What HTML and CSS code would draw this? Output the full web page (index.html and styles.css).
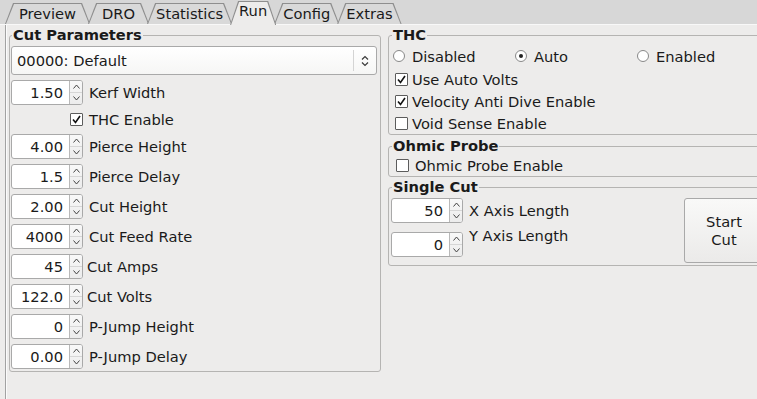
FILE: index.html
```
<!DOCTYPE html>
<html>
<head>
	<title>Run</title>
	<link rel="stylesheet" href="styles.css">
</head>
<body>
	<div class="tabbar">
		<span class="tab tab-wide">Preview</span>
		<span class="tab tab-wide">DRO</span>
		<span class="tab">Statistics</span>
		<span class="tab current">Run</span>
		<span class="tab">Config</span>
		<span class="tab">Extras</span>
	</div>

	<div class="pane">
		<div class="col-left">
			<fieldset class="group group-cut">
				<legend>Cut Parameters</legend>
				<div class="combo">
					<span class="combo-text">00000: Default</span>
					<span class="combo-btn">
						<svg width="8" height="12" viewBox="0 0 8 12"><polyline points="1,4.5 4,1.5 7,4.5" fill="none" stroke="#3a3a3a" stroke-width="1.2"/><polyline points="1,7.5 4,10.5 7,7.5" fill="none" stroke="#3a3a3a" stroke-width="1.2"/></svg>
					</span>
				</div>

				<div class="row">
					<span class="spin"><span class="spin-val">1.50</span><span class="spin-btns"><span><svg width="7" height="5" viewBox="0 0 7 5"><polyline points="0.5,4.5 3.5,1 6.5,4.5" fill="none" stroke="#444" stroke-width="1"/></svg></span><span><svg width="7" height="5" viewBox="0 0 7 5"><polyline points="0.5,0.5 3.5,4 6.5,0.5" fill="none" stroke="#444" stroke-width="1"/></svg></span></span></span>
					<span class="label">Kerf Width</span>
				</div>
				<div class="row row-check">
					<span class="check on"><svg width="11" height="11" viewBox="0 0 11 11"><polyline points="2,5.5 4.5,8.5 9,2" fill="none" stroke="#111" stroke-width="1.6"/></svg></span>
					<span class="label">THC Enable</span>
				</div>
				<div class="row">
					<span class="spin"><span class="spin-val">4.00</span><span class="spin-btns"><span><svg width="7" height="5" viewBox="0 0 7 5"><polyline points="0.5,4.5 3.5,1 6.5,4.5" fill="none" stroke="#444" stroke-width="1"/></svg></span><span><svg width="7" height="5" viewBox="0 0 7 5"><polyline points="0.5,0.5 3.5,4 6.5,0.5" fill="none" stroke="#444" stroke-width="1"/></svg></span></span></span>
					<span class="label">Pierce Height</span>
				</div>
				<div class="row">
					<span class="spin"><span class="spin-val">1.5</span><span class="spin-btns"><span><svg width="7" height="5" viewBox="0 0 7 5"><polyline points="0.5,4.5 3.5,1 6.5,4.5" fill="none" stroke="#444" stroke-width="1"/></svg></span><span><svg width="7" height="5" viewBox="0 0 7 5"><polyline points="0.5,0.5 3.5,4 6.5,0.5" fill="none" stroke="#444" stroke-width="1"/></svg></span></span></span>
					<span class="label">Pierce Delay</span>
				</div>
				<div class="row">
					<span class="spin"><span class="spin-val">2.00</span><span class="spin-btns"><span><svg width="7" height="5" viewBox="0 0 7 5"><polyline points="0.5,4.5 3.5,1 6.5,4.5" fill="none" stroke="#444" stroke-width="1"/></svg></span><span><svg width="7" height="5" viewBox="0 0 7 5"><polyline points="0.5,0.5 3.5,4 6.5,0.5" fill="none" stroke="#444" stroke-width="1"/></svg></span></span></span>
					<span class="label">Cut Height</span>
				</div>
				<div class="row">
					<span class="spin"><span class="spin-val">4000</span><span class="spin-btns"><span><svg width="7" height="5" viewBox="0 0 7 5"><polyline points="0.5,4.5 3.5,1 6.5,4.5" fill="none" stroke="#444" stroke-width="1"/></svg></span><span><svg width="7" height="5" viewBox="0 0 7 5"><polyline points="0.5,0.5 3.5,4 6.5,0.5" fill="none" stroke="#444" stroke-width="1"/></svg></span></span></span>
					<span class="label">Cut Feed Rate</span>
				</div>
				<div class="row row-tight">
					<span class="spin"><span class="spin-val">45</span><span class="spin-btns"><span><svg width="7" height="5" viewBox="0 0 7 5"><polyline points="0.5,4.5 3.5,1 6.5,4.5" fill="none" stroke="#444" stroke-width="1"/></svg></span><span><svg width="7" height="5" viewBox="0 0 7 5"><polyline points="0.5,0.5 3.5,4 6.5,0.5" fill="none" stroke="#444" stroke-width="1"/></svg></span></span></span>
					<span class="label">Cut Amps</span>
				</div>
				<div class="row row-tight">
					<span class="spin"><span class="spin-val">122.0</span><span class="spin-btns"><span><svg width="7" height="5" viewBox="0 0 7 5"><polyline points="0.5,4.5 3.5,1 6.5,4.5" fill="none" stroke="#444" stroke-width="1"/></svg></span><span><svg width="7" height="5" viewBox="0 0 7 5"><polyline points="0.5,0.5 3.5,4 6.5,0.5" fill="none" stroke="#444" stroke-width="1"/></svg></span></span></span>
					<span class="label">Cut Volts</span>
				</div>
				<div class="row">
					<span class="spin"><span class="spin-val">0</span><span class="spin-btns"><span><svg width="7" height="5" viewBox="0 0 7 5"><polyline points="0.5,4.5 3.5,1 6.5,4.5" fill="none" stroke="#444" stroke-width="1"/></svg></span><span><svg width="7" height="5" viewBox="0 0 7 5"><polyline points="0.5,0.5 3.5,4 6.5,0.5" fill="none" stroke="#444" stroke-width="1"/></svg></span></span></span>
					<span class="label">P-Jump Height</span>
				</div>
				<div class="row">
					<span class="spin"><span class="spin-val">0.00</span><span class="spin-btns"><span><svg width="7" height="5" viewBox="0 0 7 5"><polyline points="0.5,4.5 3.5,1 6.5,4.5" fill="none" stroke="#444" stroke-width="1"/></svg></span><span><svg width="7" height="5" viewBox="0 0 7 5"><polyline points="0.5,0.5 3.5,4 6.5,0.5" fill="none" stroke="#444" stroke-width="1"/></svg></span></span></span>
					<span class="label">P-Jump Delay</span>
				</div>
			</fieldset>
		</div>

		<div class="col-right">
			<fieldset class="group group-thc">
				<legend>THC</legend>
				<div class="radios">
					<span class="opt"><span class="radio"></span>Disabled</span>
					<span class="opt"><span class="radio on"></span>Auto</span>
					<span class="opt"><span class="radio"></span>Enabled</span>
				</div>
				<div class="opt-row"><span class="check on"><svg width="11" height="11" viewBox="0 0 11 11"><polyline points="2,5.5 4.5,8.5 9,2" fill="none" stroke="#111" stroke-width="1.6"/></svg></span>Use Auto Volts</div>
				<div class="opt-row"><span class="check on"><svg width="11" height="11" viewBox="0 0 11 11"><polyline points="2,5.5 4.5,8.5 9,2" fill="none" stroke="#111" stroke-width="1.6"/></svg></span>Velocity Anti Dive Enable</div>
				<div class="opt-row"><span class="check"></span>Void Sense Enable</div>
			</fieldset>

			<fieldset class="group group-ohmic">
				<legend>Ohmic Probe</legend>
				<div class="opt-row opt-wide"><span class="check"></span>Ohmic Probe Enable</div>
			</fieldset>

			<fieldset class="group group-single">
				<legend>Single Cut</legend>
				<div class="single">
					<div class="single-fields">
						<div class="row row-first">
							<span class="spin"><span class="spin-val">50</span><span class="spin-btns"><span><svg width="7" height="5" viewBox="0 0 7 5"><polyline points="0.5,4.5 3.5,1 6.5,4.5" fill="none" stroke="#444" stroke-width="1"/></svg></span><span><svg width="7" height="5" viewBox="0 0 7 5"><polyline points="0.5,0.5 3.5,4 6.5,0.5" fill="none" stroke="#444" stroke-width="1"/></svg></span></span></span>
							<span class="label">X Axis Length</span>
						</div>
						<div class="row row-second">
							<span class="spin"><span class="spin-val">0</span><span class="spin-btns"><span><svg width="7" height="5" viewBox="0 0 7 5"><polyline points="0.5,4.5 3.5,1 6.5,4.5" fill="none" stroke="#444" stroke-width="1"/></svg></span><span><svg width="7" height="5" viewBox="0 0 7 5"><polyline points="0.5,0.5 3.5,4 6.5,0.5" fill="none" stroke="#444" stroke-width="1"/></svg></span></span></span>
							<span class="label label-high">Y Axis Length</span>
						</div>
					</div>
					<button class="big-btn" type="button">Start<br>Cut</button>
				</div>
			</fieldset>
		</div>
	</div>
</body>
</html>
```
FILE: styles.css
```
/* Run tab */

html, body { margin: 0; padding: 0; }
body {
	width: 757px;
	height: 399px;
	overflow: hidden;
	background: #edeceb;
	color: #1a1a1a;
	font-family: "DejaVu Sans", sans-serif;
	font-size: 14.67px;
	line-height: 17px;
}

/* tabs */
.tabbar {
	display: flex;
	align-items: flex-end;
	height: 24px;
	padding-left: 5px;
	background: #d7d7d7;
	border-bottom: 1px solid #f8f8f8;
}
.tab {
	position: relative;
	z-index: 0;
	height: 21px;
	line-height: 21px;
	padding: 0 9px;
	margin-right: -2px;
	white-space: nowrap;
}
.tab-wide { padding: 0 14px; }
.tab::before, .tab::after {
	content: "";
	position: absolute;
	z-index: -1;
	clip-path: polygon(0 100%, 8px 0, calc(100% - 8px) 0, 100% 100%);
}
.tab::before { top: 0; left: 0; right: 0; bottom: 0; background: #8e8e8e; }
.tab::after { top: 1px; left: 1px; right: 1px; bottom: 0; background: #d9d9d9; }
.tab.current {
	height: 24px;
	margin-bottom: -1px;
	padding-bottom: 4px;
	box-sizing: border-box;
	line-height: 20px;
	z-index: 1;
}
.tab.current::after { background: #edeceb; }

/* pane */
.pane {
	display: flex;
	gap: 7px;
	height: 374px;
	padding: 2px 0 0 3px;
	box-sizing: border-box;
	border-left: 1px solid #a2a2a2;
	margin-left: 5px;
	box-shadow: inset 1px 0 #fbfbfb;
}
.col-left { flex: 0 0 372px; }
.col-right { flex: 0 0 380px; }

/* group boxes */
.group {
	margin: 0;
	min-width: 0;
	border: 1px solid #b5b4b2;
	border-radius: 3px;
	padding: 0 3px 2px 1px;
}
.group legend {
	margin-left: 1px;
	padding: 0 1px;
	font-weight: bold;
	line-height: 16px;
}
.group-thc, .group-ohmic, .group-single { padding: 0 2px 0 2px; }
.group-ohmic { margin-top: 3px; }
.group-single { margin-top: 2px; padding-bottom: 2px; }

/* combo */
.combo {
	display: flex;
	align-items: center;
	height: 29px;
	margin-top: 3px;
	border: 1px solid #a9a9a9;
	border-radius: 3px;
	background: linear-gradient(#ffffff, #f6f6f5);
	box-sizing: border-box;
}
.combo-text { flex: 1; padding-left: 5px; }
.combo-btn {
	display: flex;
	align-items: center;
	justify-content: center;
	width: 22px;
	height: 21px;
	border-left: 1px solid #d4d4d4;
}

/* spin rows */
.row {
	display: flex;
	align-items: center;
	gap: 6px;
	height: 25px;
	margin-top: 5px;
}
.row-tight { gap: 4px; }
.row-check { height: 19px; padding-left: 59px; }
.spin {
	display: flex;
	flex: 0 0 72px;
	height: 25px;
	border: 1px solid #a9a9a9;
	border-radius: 3px;
	background: #fff;
	box-sizing: border-box;
	overflow: hidden;
}
.spin-val {
	flex: 1;
	text-align: right;
	padding-right: 6px;
	line-height: 23px;
}
.spin-btns {
	display: flex;
	flex-direction: column;
	width: 12px;
	border-left: 1px solid #b9b9b9;
	background: linear-gradient(#f8f8f8, #ececec);
}
.spin-btns span {
	flex: 1;
	display: flex;
	align-items: center;
	justify-content: center;
}
.spin-btns span + span { border-top: 1px solid #d6d6d6; }

/* check and radio */
.check {
	display: inline-flex;
	align-items: center;
	justify-content: center;
	width: 13px;
	height: 13px;
	border: 1px solid #5c5c5c;
	border-radius: 1px;
	background: #fff;
	box-sizing: border-box;
	flex: none;
}
.radio {
	display: inline-flex;
	align-items: center;
	justify-content: center;
	width: 12px;
	height: 12px;
	border: 1px solid #888;
	border-radius: 50%;
	background: #fff;
	box-sizing: border-box;
	margin-right: 7px;
	flex: none;
}
.radio.on::after {
	content: "";
	width: 4px;
	height: 4px;
	border-radius: 50%;
	background: #222;
}
.radios {
	display: grid;
	grid-template-columns: 122px 122px 122px;
	height: 22px;
	margin-top: 2px;
	padding-left: 2px;
}
.opt { display: flex; align-items: center; }
.opt-row {
	display: flex;
	align-items: center;
	gap: 4px;
	height: 22px;
	padding-left: 4px;
}
.opt-wide { padding-left: 5px; gap: 6px; }
.radios + .opt-row { margin-top: 1px; }

/* single cut */
.single { display: flex; align-items: flex-start; }
.single-fields { flex: 0 0 293px; }
.row-first { margin-top: 3px; }
.row-second { margin-top: 9px; }
.label-high { align-self: flex-start; margin-top: -5px; }
.big-btn {
	width: 80px;
	height: 65px;
	margin-top: 3px;
	border: 1px solid #a9a9a9;
	border-radius: 3px;
	background: linear-gradient(#f9f9f8, #ebeae9);
	font: inherit;
	line-height: 18px;
	color: inherit;
	padding: 0;
}
```
